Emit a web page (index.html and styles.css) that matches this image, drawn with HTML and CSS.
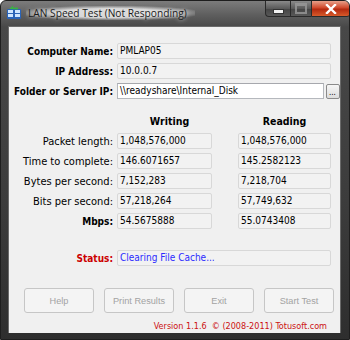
FILE: index.html
```html
<!DOCTYPE html>
<html>
<head>
<meta charset="utf-8">
<link rel="stylesheet" href="styles.css">
</head>
<body>
<div class="window">
  <div class="titlebar">
    <svg class="app-icon" width="16" height="16" viewBox="0 0 16 16">
      <rect x="1" y="4" width="14" height="10" rx="1" fill="#2a64b8"/>
      <rect x="2" y="5" width="5" height="3" fill="#cfe6ff"/>
      <rect x="9" y="5" width="5" height="3" fill="#cfe6ff"/>
      <rect x="2" y="9" width="5" height="3" fill="#cfe6ff"/>
      <rect x="9" y="9" width="5" height="3" fill="#cfe6ff"/>
      <path d="M3 4 L7 0.5 L7 2.5 L12 2.5 L12 4.5 Z" fill="#3cb043"/>
    </svg>
    <span class="title">LAN Speed Test (Not Responding)</span>
    <div class="caption">
      <div class="cbtn min"><span class="glyph-min"></span></div>
      <div class="cbtn max"><span class="glyph-max"></span></div>
      <div class="cbtn close">
        <svg width="12" height="10" viewBox="0 0 12 10"><path d="M2 1 L10 9 M10 1 L2 9" stroke="#fff" stroke-width="2.4" stroke-linecap="square"/></svg>
      </div>
    </div>
  </div>
  <div class="client">
    <div class="info">
      <div class="row"><span class="lbl bold">Computer Name:</span><div class="field ro wide">PMLAP05</div></div>
      <div class="row"><span class="lbl bold">IP Address:</span><div class="field ro wide">10.0.0.7</div></div>
      <div class="row"><span class="lbl bold">Folder or Server IP:</span><div class="field edit wide">\\readyshare\Internal_Disk</div><div class="browse">...</div></div>
    </div>
    <div class="stats">
      <div class="row head"><span class="lbl"></span><span class="colh w">Writing</span><span class="colh r">Reading</span></div>
      <div class="row"><span class="lbl">Packet length:</span><div class="field ro w">1,048,576,000</div><div class="field ro r">1,048,576,000</div></div>
      <div class="row"><span class="lbl">Time to complete:</span><div class="field ro w">146.6071657</div><div class="field ro r">145.2582123</div></div>
      <div class="row"><span class="lbl">Bytes per second:</span><div class="field ro w">7,152,283</div><div class="field ro r">7,218,704</div></div>
      <div class="row"><span class="lbl">Bits per second:</span><div class="field ro w">57,218,264</div><div class="field ro r">57,749,632</div></div>
      <div class="row"><span class="lbl bold">Mbps:</span><div class="field ro w">54.5675888</div><div class="field ro r">55.0743408</div></div>
    </div>
    <div class="row status"><span class="lbl bold red">Status:</span><div class="field ro wide blue">Clearing File Cache...</div></div>
    <div class="buttons">
      <div class="btn">Help</div>
      <div class="btn">Print Results</div>
      <div class="btn">Exit</div>
      <div class="btn">Start Test</div>
    </div>
    <div class="version">Version 1.1.6 &nbsp;© (2008-2011) Totusoft.com</div>
  </div>
</div>
</body>
</html>
```
FILE: styles.css
```css
html, body {
  margin: 0;
  padding: 0;
  background: #ffffff;
}
.window {
  width: 350px;
  height: 340px;
  box-sizing: border-box;
  display: flex;
  flex-direction: column;
  background: linear-gradient(to bottom, #7c7c7c 0px, #5e5e5e 14px, #484848 26px, #3c3c3c 200px, #2e2e2e 340px);
  border: 1px solid #1e1e1e;
  border-radius: 6px 6px 0 0;
  overflow: hidden;
}
.titlebar {
  height: 25px;
  display: flex;
  align-items: flex-start;
  flex-shrink: 0;
}
.app-icon {
  margin: 4px 0 0 5px;
  flex-shrink: 0;
}
.title {
  margin: 5px 0 0 4px;
  font-family: "Open Sans", "DejaVu Sans", sans-serif;
  font-size: 10.2px;
  line-height: 14px;
  color: #1a1a1a;
  background: radial-gradient(ellipse at center, rgba(235,235,235,0.85) 45%, rgba(200,200,200,0) 78%);
  padding: 0 8px 0 2px;
  text-shadow: 0 0 4px rgba(255,255,255,0.9);
}
.caption {
  margin-left: auto;
  margin-right: -2px;
  margin-top: -1px;
  display: flex;
  height: 18px;
}
.cbtn {
  height: 17px;
  display: flex;
  align-items: center;
  justify-content: center;
  border: 1px solid #2a2a2a;
  box-sizing: border-box;
}
.min {
  width: 25px;
  border-radius: 0 0 0 4px;
  border-right: none;
  background: linear-gradient(to bottom, #8a8a8a, #5a5a5a 50%, #444 51%, #585858);
}
.max {
  width: 21px;
  border-right: none;
  background: linear-gradient(to bottom, #8a8a8a, #5a5a5a 50%, #444 51%, #585858);
}
.close {
  width: 40px;
  border-radius: 0 0 4px 0;
  background: linear-gradient(to bottom, #e8a08a, #d0492c 45%, #b42a10 55%, #d65a2a);
}
.glyph-min {
  display: block;
  width: 9px;
  height: 3px;
  margin-top: 5px;
  background: #f2f2f2;
  border: 1px solid #333;
}
.glyph-max {
  display: block;
  width: 8px;
  height: 6px;
  border: 2px solid #9a9a9a;
  border-top-width: 3px;
  opacity: 0.8;
}
.client {
  margin: 0 8px 0 7px;
  height: 307px;
  background: #f0f0f0;
  border: 1px solid #6a6a6a;
  border-bottom: none;
  box-sizing: border-box;
  overflow: hidden;
  font-family: "DejaVu Sans Condensed", "DejaVu Sans", sans-serif;
  font-stretch: condensed;
  font-size: 10px;
  color: #000;
  padding-top: 16px;
  display: flex;
  flex-direction: column;
}
.row {
  display: flex;
  align-items: center;
  height: 16px;
}
.info {
  display: flex;
  flex-direction: column;
  gap: 4px;
}
.lbl {
  width: 104px;
  flex-shrink: 0;
  text-align: right;
  margin-right: 4px;
  white-space: nowrap;
  font-size: 11px;
}
.bold {
  font-weight: bold;
  font-size: 10px;
}
.red {
  color: #cc0000;
}
.field {
  box-sizing: border-box;
  height: 16px;
  line-height: 14px;
  padding-left: 2px;
  white-space: nowrap;
  overflow: hidden;
}
.ro {
  background: #f2f2f2;
  border: 1px solid #d8d8d8;
  border-radius: 2px;
}
.edit {
  background: #ffffff;
  border: 1px solid #b5b8bd;
  border-top-color: #a6a8ad;
}
.wide {
  width: 214px;
}
.browse {
  margin-left: 2px;
  width: 14px;
  height: 15px;
  box-sizing: border-box;
  border: 1px solid #8a8a8a;
  border-radius: 2px;
  background: linear-gradient(#f6f6f6, #dcdcdc);
  font-size: 8px;
  line-height: 15px;
  padding-left: 2px;
  flex-shrink: 0;
}
.stats {
  margin-top: 14px;
  display: flex;
  flex-direction: column;
  gap: 4px;
}
.colh {
  font-weight: bold;
  font-size: 10.5px;
  text-align: center;
}
.colh.w {
  width: 95px;
  padding-left: 10px;
  box-sizing: border-box;
}
.colh.r {
  width: 93px;
  margin-left: 26px;
}
.field.w {
  width: 95px;
}
.field.r {
  width: 93px;
  margin-left: 26px;
}
.status {
  margin-top: 21px;
}
.blue {
  color: #2b2bff;
}
.buttons {
  margin-top: 22px;
  padding-left: 15px;
  display: flex;
  gap: 10px;
}
.btn {
  width: 70px;
  height: 25px;
  box-sizing: border-box;
  border: 1px solid #c6c6c6;
  border-radius: 3px;
  background: #f4f4f4;
  font-family: "Liberation Sans", Arial, sans-serif;
  font-stretch: normal;
  font-size: 9.2px;
  color: #a3a3a3;
  display: flex;
  align-items: center;
  justify-content: center;
}
.version {
  margin-top: 7px;
  padding-right: 13px;
  text-align: right;
  font-size: 9px;
  line-height: 13px;
  color: #cc1111;
}
```
